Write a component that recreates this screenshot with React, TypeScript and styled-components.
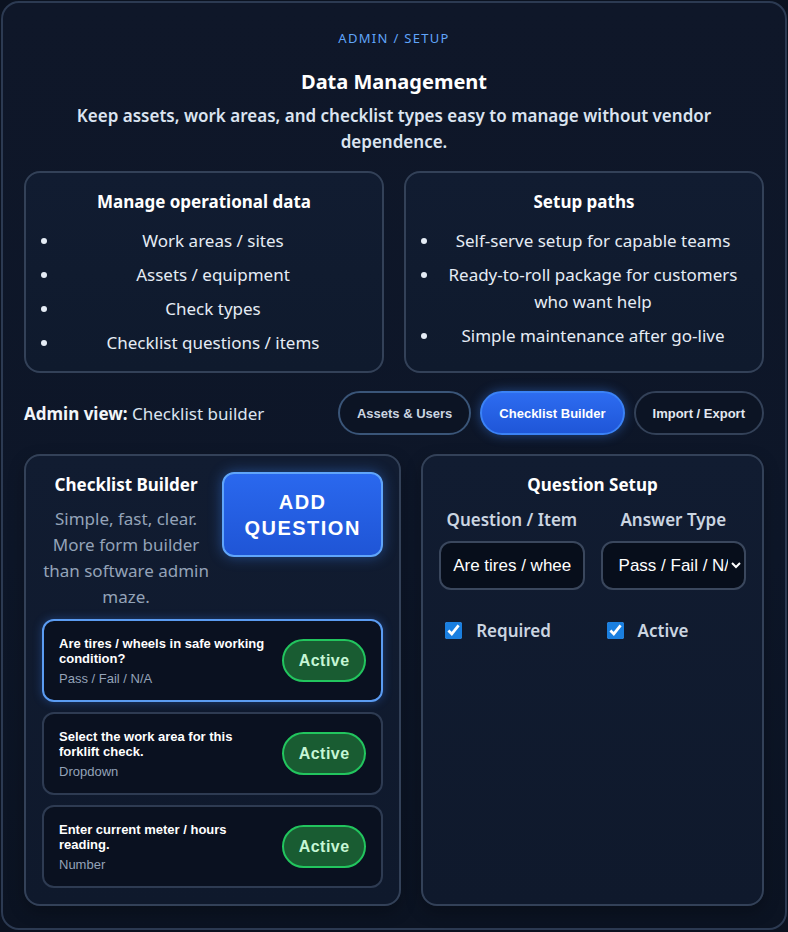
import React from "react";
import styled, { createGlobalStyle } from "styled-components";

const GlobalStyle = createGlobalStyle`
  html, body {
    margin: 0;
    padding: 0;
    background: #0b1220;
  }
  * {
    box-sizing: border-box;
  }
`;

const questions = [
  { title: "Are tires / wheels in safe working condition?", type: "Pass / Fail / N/A", selected: true },
  { title: "Select the work area for this forklift check.", type: "Dropdown", selected: false },
  { title: "Enter current meter / hours reading.", type: "Number", selected: false },
];

const App = () => {
  return (
    <>
      <GlobalStyle />
      <Shell>
        <Eyebrow>ADMIN / SETUP</Eyebrow>
        <Title>Data Management</Title>
        <Lead>Keep assets, work areas, and checklist types easy to manage without vendor dependence.</Lead>

        <InfoGrid>
          <InfoCard>
            <CardTitle>Manage operational data</CardTitle>
            <BulletList>
              <li>Work areas / sites</li>
              <li>Assets / equipment</li>
              <li>Check types</li>
              <li>Checklist questions / items</li>
            </BulletList>
          </InfoCard>
          <InfoCard>
            <CardTitle>Setup paths</CardTitle>
            <BulletList>
              <li>Self-serve setup for capable teams</li>
              <li>Ready-to-roll package for customers who want help</li>
              <li>Simple maintenance after go-live</li>
            </BulletList>
          </InfoCard>
        </InfoGrid>

        <ViewBar>
          <ViewLabel>
            <strong>Admin view:</strong> Checklist builder
          </ViewLabel>
          <Tabs>
            <Tab $variant="hover">Assets &amp; Users</Tab>
            <Tab $variant="active">Checklist Builder</Tab>
            <Tab>Import / Export</Tab>
          </Tabs>
        </ViewBar>

        <Workspace>
          <Panel>
            <BuilderHead>
              <BuilderIntro>
                <PanelTitle>Checklist Builder</PanelTitle>
                <Muted>Simple, fast, clear. More form builder than software admin maze.</Muted>
              </BuilderIntro>
              <AddButton>ADD QUESTION</AddButton>
            </BuilderHead>
            <QuestionList>
              {questions.map((q) => (
                <QuestionRow key={q.title} $selected={q.selected}>
                  <QuestionText>
                    <QuestionTitle>{q.title}</QuestionTitle>
                    <QuestionType>{q.type}</QuestionType>
                  </QuestionText>
                  <StatusBadge>Active</StatusBadge>
                </QuestionRow>
              ))}
            </QuestionList>
          </Panel>

          <Panel>
            <PanelTitle>Question Setup</PanelTitle>
            <FieldGrid>
              <Field>
                <FieldLabel>Question / Item</FieldLabel>
                <TextInput defaultValue="Are tires / wheels in safe working condition?" />
              </Field>
              <Field>
                <FieldLabel>Answer Type</FieldLabel>
                <SelectInput defaultValue="pfn">
                  <option value="pfn">Pass / Fail / N/A</option>
                  <option value="dd">Dropdown</option>
                  <option value="num">Number</option>
                </SelectInput>
              </Field>
            </FieldGrid>
            <ToggleGrid>
              <CheckLabel>
                <Check type="checkbox" defaultChecked />
                Required
              </CheckLabel>
              <CheckLabel>
                <Check type="checkbox" defaultChecked />
                Active
              </CheckLabel>
            </ToggleGrid>
          </Panel>
        </Workspace>
      </Shell>
    </>
  );
};

export default App;

const uiFont = `"Noto Sans", "Open Sans", sans-serif`;
const arial = `"Liberation Sans", Arial, sans-serif`;

const Shell = styled.div`
  margin: 1px;
  min-height: 929px;
  border: 2px solid #2c3a52;
  border-radius: 18px;
  background: linear-gradient(180deg, #0f1729 0%, #0d1628 60%, #0b1322 100%);
  padding: 26px 21px 22px;
  font-family: ${uiFont};
  color: #e2e8f0;
  text-align: center;
`;

const Eyebrow = styled.div`
  font-size: 13px;
  letter-spacing: 1.3px;
  color: #60a5fa;
  line-height: 18px;
`;

const Title = styled.h1`
  margin: 22px 0 0;
  font-size: 20px;
  line-height: 26px;
  font-weight: 700;
  color: #ffffff;
`;

const Lead = styled.p`
  margin: 8px auto 0;
  max-width: 680px;
  font-size: 17px;
  line-height: 26px;
  font-weight: 600;
  color: #dbe4f0;
`;

const InfoGrid = styled.div`
  display: grid;
  grid-template-columns: 1fr 1fr;
  gap: 20px;
  margin-top: 16px;
`;

const InfoCard = styled.section`
  border: 2px solid #334158;
  border-radius: 16px;
  background: linear-gradient(180deg, #111c31 0%, #0f1a2d 100%);
  padding: 16px 16px 15px;
`;

const CardTitle = styled.h3`
  margin: 0;
  font-size: 17px;
  line-height: 26px;
  font-weight: 700;
  color: #ffffff;
`;

const BulletList = styled.ul`
  margin: 12px 0 0;
  padding-left: 18px;
  font-size: 17px;
  line-height: 27px;
  color: #e5ecf5;

  li + li {
    margin-top: 7px;
  }
`;

const ViewBar = styled.div`
  display: flex;
  align-items: center;
  justify-content: space-between;
  margin-top: 18px;
`;

const ViewLabel = styled.div`
  font-size: 17px;
  color: #dbe4f0;

  strong {
    font-weight: 700;
    color: #f1f5f9;
  }
`;

const Tabs = styled.div`
  display: flex;
  gap: 9px;
`;

const Tab = styled.button<{ $variant?: "active" | "hover" }>`
  height: 44px;
  padding: 0 17px;
  border-radius: 999px;
  font-family: ${arial};
  font-size: 13px;
  font-weight: 700;
  cursor: pointer;
  border: 2px solid
    ${(p) => (p.$variant === "active" ? "#3b82f6" : p.$variant === "hover" ? "#3a5578" : "#334158")};
  background: ${(p) =>
    p.$variant === "active" ? "linear-gradient(180deg, #2d6cf0 0%, #1f56d8 100%)" : "#0c1424"};
  color: ${(p) => (p.$variant === "active" ? "#ffffff" : p.$variant === "hover" ? "#cbd5e1" : "#e2e8f0")};
  box-shadow: ${(p) => (p.$variant === "active" ? "0 0 12px rgba(59, 130, 246, 0.45)" : "none")};
`;

const Workspace = styled.div`
  display: grid;
  grid-template-columns: 1.1fr 1fr;
  gap: 20px;
  margin-top: 19px;
`;

const Panel = styled.section`
  border: 2px solid #334158;
  border-radius: 16px;
  background: linear-gradient(180deg, #111c31 0%, #0f192c 100%);
  padding: 16px;
  min-height: 451px;
  box-shadow: 0 6px 16px rgba(0, 0, 0, 0.25);
`;

const BuilderHead = styled.div`
  display: flex;
  align-items: flex-start;
  gap: 12px;
`;

const BuilderIntro = styled.div`
  flex: 1;
`;

const PanelTitle = styled.h3`
  margin: 0;
  font-size: 17px;
  line-height: 26px;
  font-weight: 700;
  color: #ffffff;
`;

const Muted = styled.p`
  margin: 8px 0 0;
  font-size: 17px;
  line-height: 26px;
  color: #94a3b8;
`;

const AddButton = styled.button`
  width: 161px;
  height: 85px;
  border-radius: 12px;
  border: 2px solid #60a5fa;
  background: linear-gradient(180deg, #2a68ee 0%, #1f55d6 100%);
  color: #ffffff;
  font-family: ${arial};
  font-size: 20px;
  font-weight: 900;
  letter-spacing: 1.5px;
  line-height: 26px;
  box-shadow: 0 0 14px rgba(59, 130, 246, 0.45);
  cursor: pointer;
`;

const QuestionList = styled.div`
  display: flex;
  flex-direction: column;
  gap: 10px;
  margin-top: 9px;
`;

const QuestionRow = styled.div<{ $selected: boolean }>`
  display: flex;
  align-items: center;
  gap: 12px;
  min-height: 83px;
  padding: 12px 15px;
  border-radius: 12px;
  border: 2px solid ${(p) => (p.$selected ? "#5b9cf2" : "#2e3b52")};
  background: #0a1120;
  box-shadow: ${(p) => (p.$selected ? "0 0 10px rgba(59, 130, 246, 0.35)" : "none")};
  text-align: left;
`;

const QuestionText = styled.div`
  flex: 1;
  min-width: 0;
`;

const QuestionTitle = styled.div`
  font-family: ${arial};
  font-size: 13px;
  font-weight: 700;
  line-height: 15px;
  color: #ffffff;
`;

const QuestionType = styled.div`
  margin-top: 5px;
  font-family: ${arial};
  font-size: 13px;
  line-height: 15px;
  color: #94a3b8;
`;

const StatusBadge = styled.span`
  flex-shrink: 0;
  width: 84px;
  height: 43px;
  display: flex;
  align-items: center;
  justify-content: center;
  border-radius: 999px;
  border: 2px solid #22c55e;
  background: #195c32;
  color: #c6f6d5;
  font-family: ${arial};
  font-size: 16px;
  font-weight: 900;
  letter-spacing: 0.5px;
`;

const FieldGrid = styled.div`
  display: grid;
  grid-template-columns: 1fr 1fr;
  gap: 16px;
  margin-top: 9px;
`;

const Field = styled.label`
  display: flex;
  flex-direction: column;
  gap: 8px;
`;

const FieldLabel = styled.span`
  font-size: 17px;
  line-height: 26px;
  font-weight: 600;
  color: #cbd5e1;
`;

const inputBase = `
  width: 100%;
  height: 49px;
  border-radius: 12px;
  border: 2px solid #3a475d;
  background: #070e1b;
  color: #ffffff;
  font-family: "Liberation Sans", Arial, sans-serif;
  font-size: 17px;
  outline: none;
`;

const TextInput = styled.input`
  ${inputBase}
  padding: 0 12px;
`;

const SelectInput = styled.select`
  ${inputBase}
  padding: 0 0 0 12px;
  color-scheme: dark;
`;

const ToggleGrid = styled.div`
  display: grid;
  grid-template-columns: 1fr 1fr;
  gap: 16px;
  margin-top: 29px;
`;

const CheckLabel = styled.label`
  display: flex;
  align-items: center;
  gap: 14px;
  padding-left: 6px;
  font-size: 17px;
  font-weight: 600;
  color: #cbd5e1;
`;

const Check = styled.input`
  width: 17px;
  height: 17px;
  margin: 0;
  accent-color: #1a7fe0;
`;
